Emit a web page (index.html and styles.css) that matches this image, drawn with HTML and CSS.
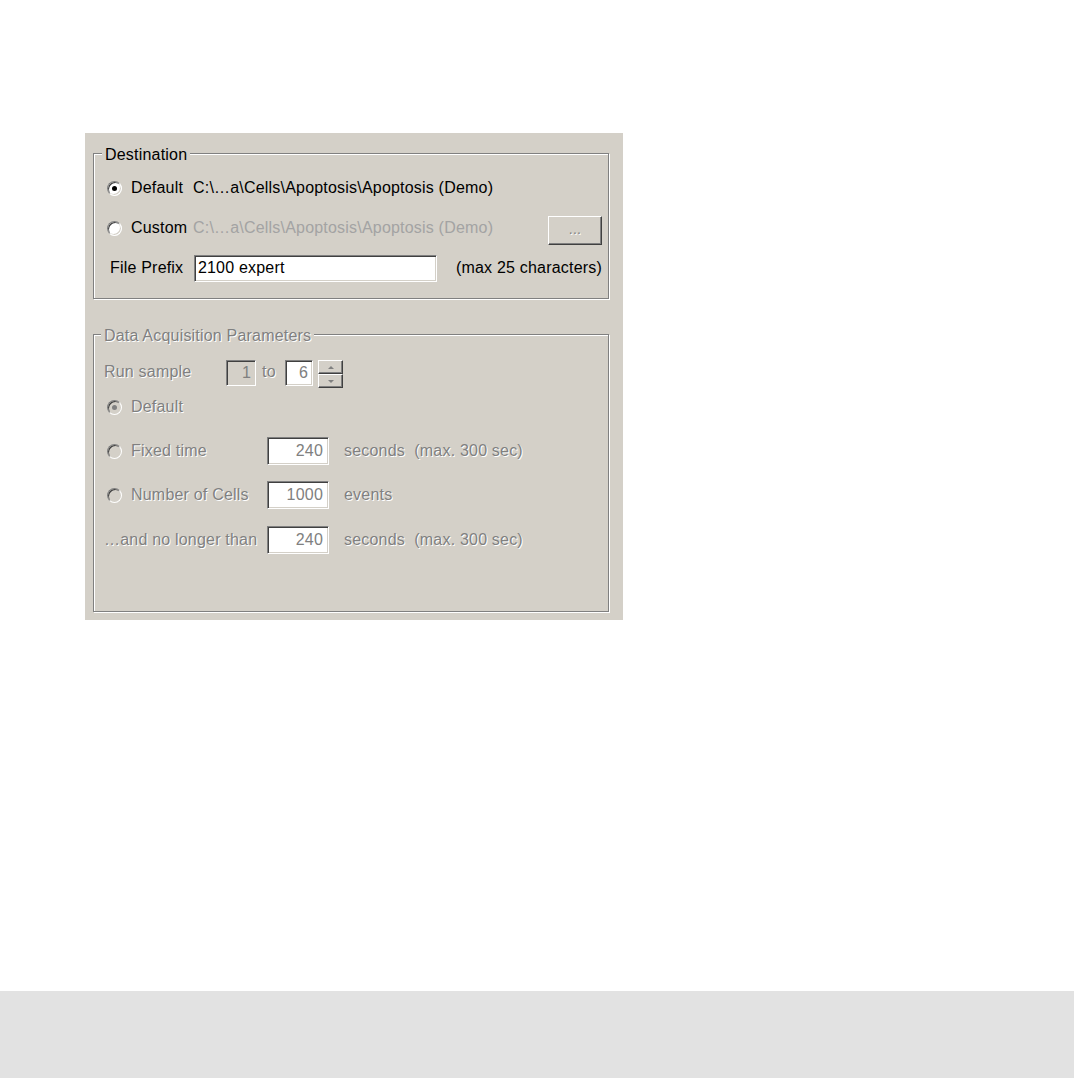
FILE: index.html
```html
<!DOCTYPE html>
<html>
<head>
<meta charset="utf-8">
<title>Acquisition settings</title>
<link rel="stylesheet" href="styles.css">
</head>
<body>
<div class="page">
  <div class="panel">
    <div class="group dest">
      <div class="legend">Destination</div>
      <div class="row r1">
        <span class="radio checked"></span><span class="lbl w62">Default</span><span class="path">C:\…a\Cells\Apoptosis\Apoptosis (Demo)</span>
      </div>
      <div class="row r2">
        <span class="radio"></span><span class="lbl w62">Custom</span><span class="path dim">C:\…a\Cells\Apoptosis\Apoptosis (Demo)</span>
        <span class="btn"><span class="etched">...</span></span>
      </div>
      <div class="row r3">
        <span class="lbl prefix">File Prefix</span><span class="field prefix-field">2100 expert</span><span class="hint">(max 25 characters)</span>
      </div>
    </div>

    <div class="group acq">
      <div class="legend etched">Data Acquisition Parameters</div>
      <div class="row a1">
        <span class="lbl etched w122">Run sample</span>
        <span class="field small gray-bg">1</span>
        <span class="lbl etched to">to</span>
        <span class="field small six">6</span>
        <span class="spin">
          <span class="spin-btn"><span class="tri up"></span></span>
          <span class="spin-btn"><span class="tri down"></span></span>
        </span>
      </div>
      <div class="row a2">
        <span class="radio off checked"></span><span class="lbl etched">Default</span>
      </div>
      <div class="row a3">
        <span class="radio off"></span><span class="lbl etched w136">Fixed time</span>
        <span class="field num">240</span><span class="unit etched">seconds  (max. 300 sec)</span>
      </div>
      <div class="row a4">
        <span class="radio off"></span><span class="lbl etched w136">Number of Cells</span>
        <span class="field num">1000</span><span class="unit etched">events</span>
      </div>
      <div class="row a5">
        <span class="lbl etched w163">…and no longer than</span>
        <span class="field num">240</span><span class="unit etched">seconds  (max. 300 sec)</span>
      </div>
    </div>
  </div>
</div>
<div class="footer"></div>
</body>
</html>
```

FILE: styles.css
```css
html, body {
  margin: 0;
  padding: 0;
  background: #ffffff;
}

body {
  font-family: "Liberation Sans", Arial, sans-serif;
  font-size: 16px;
  line-height: 18px;
  letter-spacing: 0.2px;
  color: #000;
}

.page {
  box-sizing: border-box;
  height: 991px;
  padding: 133px 0 0 85px;
}

.panel {
  box-sizing: border-box;
  width: 538px;
  height: 487px;
  background: #d4d0c8;
  padding: 20px 0 0 8px;
}

.group {
  box-sizing: border-box;
  width: 516px;
  border: 1px solid #808080;
  box-shadow: 1px 1px 0 #ffffff, inset 1px 1px 0 #ffffff;
}

.dest {
  padding: 0 6px 10px 13px;
}

.acq {
  margin-top: 35px;
  padding: 0 6px 57px 10px;
}

.legend {
  width: fit-content;
  height: 18px;
  margin-top: -9px;
  background: #d4d0c8;
  position: relative;
  top: 1px;
}

.dest .legend {
  margin-left: -5px;
  padding: 0 3px;
}

.acq .legend {
  margin-left: -3px;
  padding: 0 3px;
}

.row {
  display: flex;
  align-items: center;
  white-space: nowrap;
}

.dest .row {
  height: 40px;
}

.dest .r1 {
  margin-top: 5px;
}

.acq .row {
  height: 28px;
}

.acq .a1 { margin-top: 14px; }
.acq .a2 { margin-top: 7px; }
.acq .a3 { margin-top: 16px; }
.acq .a4 { margin-top: 16px; }
.acq .a5 { margin-top: 17px; }

.lbl {
  display: inline-block;
}

.w62 { width: 62px; }
.w122 { width: 122px; }
.w136 { width: 136px; }
.w163 { width: 163px; }

.prefix {
  width: 84px;
  margin-left: 3px;
}

.path.dim {
  color: #a3a3a3;
}

.etched {
  color: #808080;
  text-shadow: 1px 1px 0 #ffffff;
}

.hint {
  margin-left: 19px;
}

/* radio buttons */
.radio {
  box-sizing: border-box;
  flex: none;
  width: 15px;
  height: 15px;
  margin-right: 9px;
  border-radius: 50%;
  border: 1px solid;
  border-color: #808080 #ffffff #ffffff #808080;
  box-shadow: inset 1px 1px 0 #404040, inset -1px -1px 0 #d4d0c8;
  background: #ffffff;
  position: relative;
}

.acq .radio {
  margin-left: 3px;
}

.radio.checked::after {
  content: "";
  position: absolute;
  left: 4px;
  top: 4px;
  width: 5px;
  height: 5px;
  border-radius: 50%;
  background: #000;
}

.radio.off {
  background: #d4d0c8;
}

.radio.off.checked::after {
  background: #808080;
}

/* sunken fields */
.field {
  box-sizing: border-box;
  display: inline-flex;
  align-items: center;
  flex: none;
  border: 1px solid;
  border-color: #808080 #ffffff #ffffff #808080;
  box-shadow: inset 1px 1px 0 #404040, inset -1px -1px 0 #d4d0c8;
  background: #ffffff;
}

.prefix-field {
  width: 243px;
  height: 27px;
  padding-left: 3px;
  color: #000;
}

.field.small {
  height: 26px;
  justify-content: flex-end;
  padding-right: 4px;
  color: #808080;
  align-self: flex-start;
  margin-top: 2px;
}

.gray-bg {
  width: 30px;
  background: #d4d0c8;
}

.six {
  width: 28px;
}

.to {
  width: 23px;
  margin-left: 6px;
}

.field.num {
  width: 62px;
  height: 28px;
  justify-content: flex-end;
  padding-right: 5px;
  color: #808080;
}

.unit {
  margin-left: 15px;
  white-space: pre;
}

/* raised buttons */
.btn {
  box-sizing: border-box;
  display: inline-flex;
  align-items: center;
  justify-content: center;
  width: 54px;
  height: 29px;
  margin-left: auto;
  margin-top: 4px;
  border: 1px solid;
  border-color: #ffffff #404040 #404040 #ffffff;
  box-shadow: inset -1px -1px 0 #808080, inset 1px 1px 0 #d4d0c8;
  background: #d4d0c8;
  font-size: 14px;
  padding-bottom: 2px;
}

.spin {
  display: flex;
  flex-direction: column;
  width: 25px;
  height: 28px;
  margin-left: 5px;
  align-self: flex-start;
  margin-top: 2px;
}

.spin-btn {
  box-sizing: border-box;
  flex: 1;
  display: flex;
  align-items: center;
  justify-content: center;
  border: 1px solid;
  border-color: #ffffff #404040 #404040 #ffffff;
  box-shadow: inset -1px -1px 0 #808080, inset 1px 1px 0 #d4d0c8;
  background: #d4d0c8;
}

.tri {
  width: 0;
  height: 0;
  border-left: 3px solid transparent;
  border-right: 3px solid transparent;
}

.tri.up {
  border-bottom: 3px solid #808080;
}

.tri.down {
  border-top: 3px solid #808080;
}

.footer {
  width: 1074px;
  height: 87px;
  background: #e2e2e2;
}
```
